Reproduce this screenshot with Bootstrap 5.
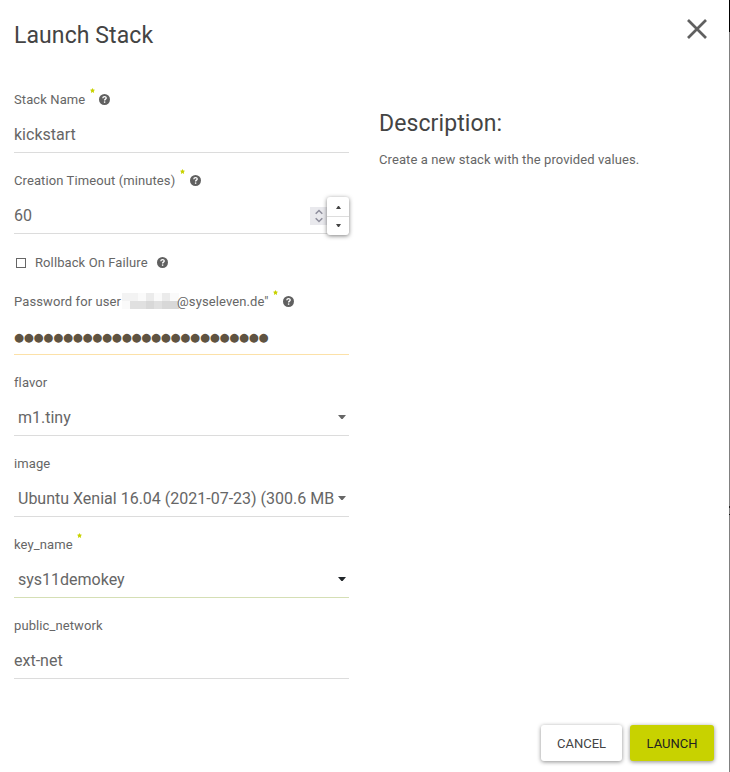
<!DOCTYPE html>
<html lang="en">
<head>
<meta charset="utf-8">
<meta name="viewport" content="width=device-width, initial-scale=1">
<title>Launch Stack</title>
<link href="https://cdn.jsdelivr.net/npm/bootstrap@5.3.0/dist/css/bootstrap.min.css" rel="stylesheet">
<style>
body{font-family:Roboto,"Liberation Sans",sans-serif;font-size:13px;line-height:20px;letter-spacing:.1px;color:#666;background:#fff}
.dialog{height:772px;padding:0 16px 11px 14px;overflow:hidden;position:relative}
.edge{position:absolute;right:0;top:0;width:1px;height:100%;background:linear-gradient(#000 32px,#808080 32px,#808080 506px,#222 506px,#222 508px,#808080 508px,#808080 514px,#111 514px,#111 515px,#808080 515px)}
.title-bar{height:90px;padding-top:18px}
.title-bar h4,.about h3{font-size:23px;line-height:32px;font-weight:400;color:#444;letter-spacing:.09px}
.title-bar h4{padding-top:2px}
.close-x{margin:0 6px 0 0}
.form-side{width:335px}
.about{margin-left:30px;padding-top:18px}
.about p{margin-top:10px}
.field{height:81px}
.field-label{height:20px;letter-spacing:.1px}
.value{height:37px;margin-top:6px;padding-top:2px;border-bottom:1px solid #dcdcdc;font-size:16px;letter-spacing:0;white-space:nowrap}
.choice{padding-right:3px;padding-left:4px}
.choice svg{margin-top:-2px}
.star{width:5px;height:5px;margin:-2px 0 0 4.5px}
.help{width:11px;height:11px;margin:-2px 0 0 4.5px}
.timeout .help{margin-left:5px}
.check-row{height:40px;padding-top:1px}
.check-row .help{margin-left:9px;margin-top:-1px}
.box{width:10px;height:10px;border:1px solid #666;margin:0 9px 0 2px}
.dots{font-family:"DejaVu Sans",sans-serif;font-size:11.5px;color:#5f5341;letter-spacing:-.25px}
.warn{border-color:#fce1a8}
.ok{border-color:#d5dfb5}
.spin{width:18px;height:18px;background:#e9e9ed;margin-right:-1px}
.steps{width:22px;height:38px;border-radius:3px;background:#fff;box-shadow:0 1px 4px rgba(0,0,0,.5);z-index:1;margin-top:-1px}
.steps div{height:19px;padding-top:3px}
.steps div+div{border-top:1px solid #ddd;padding-top:0}
.mosaic{width:57px;height:16px;margin:-2px -2px 0 1px}
.domain+.star{margin-left:4px}
.domain~.help{margin-left:5px}
.action{height:36px;border-radius:3px;font-size:13px;line-height:36px;padding:1px 0 0;border:0;letter-spacing:0;box-shadow:0 1px 4px rgba(0,0,0,.45);color:#444}
.cancel,.cancel:hover{width:81px;background:#fff}
.launch,.launch:hover{width:84px;background:#c8d200;color:#222}
</style>
<script src="https://cdn.jsdelivr.net/npm/bootstrap@5.3.0/dist/js/bootstrap.bundle.min.js"></script>
</head>
<body>
<svg class="d-none">
  <symbol id="star" viewBox="0 0 5 5"><path fill="#c8d200" d="M2.5 0l.8 1.5 1.7.2-1.2 1.3.3 1.9-1.6-.8-1.6.8.3-1.9L0 1.7l1.7-.2z"/></symbol>
  <symbol id="help" viewBox="0 0 11 11"><circle cx="5.5" cy="5.5" r="5.5" fill="#606060"/><path d="M3.8 4.2C3.9 2.1 7.3 2.1 7.2 4.1 7.1 5.2 5.6 5.1 5.6 6.4" fill="none" stroke="#fff" stroke-width="1.3"/><path d="M4.9 7.4h1.4v1.4H4.9z" fill="#fff"/></symbol>
  <symbol id="caret" viewBox="0 0 8 4"><path d="M0 0h8L4.6 4H3.4z" fill="currentColor"/></symbol>
</svg>
<main class="dialog d-flex flex-column">
  <div class="edge"></div>
  <header class="title-bar d-flex justify-content-between align-items-start">
    <h4 class="mb-0">Launch Stack</h4>
    <svg class="close-x" width="22" height="22" viewBox="0 0 22 22"><path d="M2 2l18 18M20 2L2 20" stroke="#606060" stroke-width="2.7"/></svg>
  </header>
  <div class="d-flex flex-grow-1">
    <form class="form-side">
      <div class="field">
        <div class="field-label d-flex"><span>Stack Name</span><svg class="star"><use href="#star"/></svg><svg class="help align-self-center"><use href="#help"/></svg></div>
        <div class="value d-flex align-items-center">kickstart</div>
      </div>
      <div class="field timeout">
        <div class="field-label d-flex"><span>Creation Timeout (minutes)</span><svg class="star"><use href="#star"/></svg><svg class="help align-self-center"><use href="#help"/></svg></div>
        <div class="value d-flex align-items-center justify-content-between"><span>60</span>
          <div class="d-flex align-items-center">
            <div class="spin d-flex align-items-center justify-content-center"><svg width="8" height="14" viewBox="0 0 8 14" fill="none" stroke="#8f8f9d" stroke-width="1.6"><path d="M.7 4.7L4 1.5l3.3 3.2M.7 9.3L4 12.5l3.3-3.2"/></svg></div>
            <div class="steps flex-shrink-0">
              <div class="d-flex align-items-center justify-content-center"><svg width="5" height="3"><path d="M0 3L2 0h1l2 3z" fill="#444"/></svg></div>
              <div class="d-flex align-items-center justify-content-center"><svg width="5" height="3"><path d="M0 0h5L3 3H2z" fill="#444"/></svg></div>
            </div>
          </div>
        </div>
      </div>
      <div class="check-row d-flex"><div class="d-flex align-items-center align-self-start"><span class="box"></span><span>Rollback On Failure</span><svg class="help"><use href="#help"/></svg></div></div>
      <div class="field">
        <div class="field-label d-flex"><span>Password for user</span><svg class="mosaic align-self-center" viewBox="0 0 57 16" shape-rendering="crispEdges"><path fill="#f3f3f3" d="M0 0h57v16H0z"/><path fill="#fafafa" d="M16 0h8v8h-8zM32 0h8v8h-8zM48 0h9v8h-9zM0 8h8v8H0z"/><path fill="#ebebeb" d="M24 0h8v8h-8zM40 0h8v8h-8z"/><path fill="#e0e0e0" d="M8 8h49v8H8z"/><path fill="#d8d8d8" d="M24 8h8v8h-8zM40 8h17v8H40z"/></svg><span class="domain">@syseleven.de"</span><svg class="star"><use href="#star"/></svg><svg class="help align-self-center"><use href="#help"/></svg></div>
        <div class="value warn d-flex align-items-center"><span class="dots">●●●●●●●●●●●●●●●●●●●●●●●●●●</span></div>
      </div>
      <div class="field">
        <div class="field-label">flavor</div>
        <div class="value choice d-flex align-items-center justify-content-between"><span>m1.tiny</span><svg width="8" height="4"><use href="#caret"/></svg></div>
      </div>
      <div class="field">
        <div class="field-label">image</div>
        <div class="value choice d-flex align-items-center justify-content-between"><span>Ubuntu Xenial 16.04 (2021-07-23) (300.6 MB</span><svg width="8" height="4"><use href="#caret"/></svg></div>
      </div>
      <div class="field">
        <div class="field-label d-flex"><span>key_name</span><svg class="star"><use href="#star"/></svg></div>
        <div class="value choice ok d-flex align-items-center justify-content-between"><span>sys11demokey</span><svg class="text-dark" width="8" height="4"><use href="#caret"/></svg></div>
      </div>
      <div class="field">
        <div class="field-label">public_network</div>
        <div class="value d-flex align-items-center">ext-net</div>
      </div>
    </form>
    <section class="about">
      <h3 class="mb-0">Description:</h3>
      <p class="mb-0">Create a new stack with the provided values.</p>
    </section>
  </div>
  <footer class="d-flex justify-content-end gap-2">
    <button class="btn action cancel">CANCEL</button>
    <button class="btn action launch">LAUNCH</button>
  </footer>
</main>
</body>
</html>
